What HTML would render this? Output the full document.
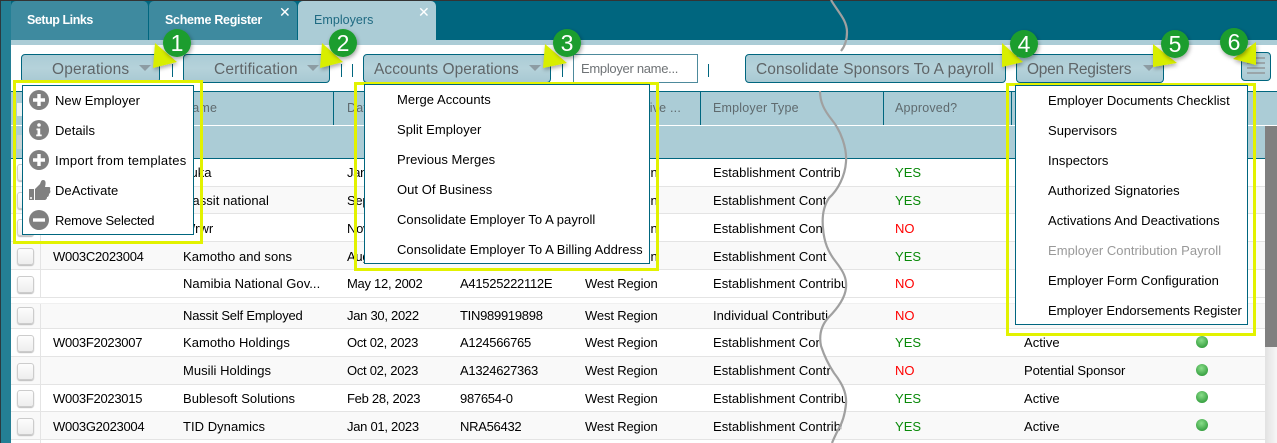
<!DOCTYPE html>
<html><head><meta charset="utf-8"><style>
html,body{margin:0;padding:0;background:#fff}
#p{position:relative;width:1277px;height:443px;overflow:hidden;background:#fff;font-family:"Liberation Sans",sans-serif;font-size:13px;color:#000}
#p div,#p span.t,#p svg{position:absolute}
.t{white-space:nowrap;line-height:18px;letter-spacing:.04px}
.d{letter-spacing:-.28px !important}
.g{letter-spacing:-.15px !important}
.tab{top:1px;height:39px;border-radius:5px 5px 0 0;box-sizing:border-box}
.btn{top:54px;height:29px;box-sizing:border-box;border:1px solid #00667f;border-radius:4px;background:linear-gradient(#abccd6,#b5d2da 50%,#a8c9d3)}
.bl{color:#5f6568;font-size:15.5px;top:61px;letter-spacing:.15px}
.caret{top:65px;width:0;height:0;border-left:6px solid transparent;border-right:6px solid transparent;border-top:6px solid #8d9ca3}
.sep{width:1px;background:#00667f;top:64px;height:13px}
.menu{background:#fff;border:1px solid #00667f;box-sizing:border-box}
.yb{border:3px solid #e2f200;box-sizing:border-box}
.r{left:11px;width:1254px;border-bottom:1px solid #e4e4e4;box-sizing:border-box}
.alt{background:#f9f9f9}
.cb{left:6px;width:17px;height:17px;box-sizing:border-box;background:linear-gradient(#fdfdfd,#eee);border:1px solid #ccc;border-radius:3px;box-shadow:0 1px 1px #bbb}
.hs{top:92px;height:33px;width:1px;background:#00667f}
.hd{color:#5f6a6e;top:99px;font-size:12.5px;letter-spacing:.2px}
.y{color:#0a8a0a}.n{color:#f00}
</style></head><body><div id="p">
<div style="left:0;top:0;width:1277px;height:1px;background:#333"></div>
<div style="left:0;top:1px;width:1277px;height:39px;background:#00667f"></div>
<div style="left:0;top:1px;width:11px;height:442px;background:#247f95"></div>
<div style="left:0;top:1px;width:1px;height:442px;background:#2b3a40"></div>
<div class="tab" style="left:11px;width:137px;background:#3e8a9f"></div>
<div class="tab" style="left:149px;width:148px;background:#3e8a9f"></div>
<div class="tab" style="left:298px;width:138px;background:#abccd6"></div>
<span class="t" style="left:27px;top:11px;color:#fff;font-weight:bold;font-size:12.5px;letter-spacing:-.45px">Setup Links</span>
<span class="t" style="left:165px;top:11px;color:#fff;font-weight:bold;font-size:12.5px;letter-spacing:-.3px">Scheme Register</span>
<span class="t" style="left:314px;top:11px;color:#1f6a82;font-size:12.5px">Employers</span>
<span class="t" style="left:279px;top:3px;color:#fff;font-size:14px">✕</span>
<span class="t" style="left:418px;top:3px;color:#fff;font-size:14px">✕</span>
<div style="left:11px;top:40px;width:1266px;height:5px;background:#abccd6"></div>

<div class="btn" style="left:21px;width:139px"></div>
<span class="t bl" style="left:52px">Operations</span><div class="caret" style="left:139px"></div>
<div class="sep" style="left:172px"></div>
<div class="btn" style="left:183px;width:147px"></div>
<span class="t bl" style="left:214px">Certification</span><div class="caret" style="left:307px"></div>
<div class="sep" style="left:341px"></div><div class="sep" style="left:352px"></div>
<div class="btn" style="left:363px;width:188px"></div>
<span class="t bl" style="left:374px;letter-spacing:.05px">Accounts Operations</span><div class="caret" style="left:529px"></div>
<div class="sep" style="left:562px"></div>
<div style="left:573px;top:54px;width:125px;height:29px;box-sizing:border-box;border:1px solid #4d8a9c;background:#fff"></div>
<span class="t" style="left:581px;top:60px;color:#6f7376;font-size:13px;letter-spacing:-.3px">Employer name...</span>
<div class="sep" style="left:708px"></div>
<div class="btn" style="left:745px;width:261px"></div>
<span class="t bl" style="left:756px;letter-spacing:.09px">Consolidate Sponsors To A payroll</span>
<div class="btn" style="left:1016px;width:148px"></div>
<span class="t bl" style="left:1027px;letter-spacing:-.25px">Open Registers</span><div class="caret" style="left:1143px"></div>
<div class="btn" style="left:1241px;top:52px;width:30px;height:29px"></div>
<div style="left:1247px;top:57px;width:18px;height:2px;background:#9aa5a9"></div>
<div style="left:1247px;top:62px;width:18px;height:2px;background:#9aa5a9"></div>
<div style="left:1247px;top:67px;width:18px;height:2px;background:#9aa5a9"></div>
<div style="left:1247px;top:72px;width:18px;height:2px;background:#9aa5a9"></div>

<div style="left:11px;top:91px;width:1266px;height:68px;background:#abccd6;border-top:1px solid #00667f;border-bottom:1px solid #00667f;box-sizing:border-box"></div>
<div style="left:11px;top:125px;width:1266px;height:1px;background:#fff"></div>
<div class="hs" style="left:333px"></div><div class="hs" style="left:445px"></div><div class="hs" style="left:571px"></div><div class="hs" style="left:700px"></div><div class="hs" style="left:883px"></div><div class="hs" style="left:1011px"></div>
<span class="t hd" style="left:183px">Name</span><span class="t hd" style="left:347px">Date</span><span class="t hd" style="left:585px">Administrative ...</span><span class="t hd" style="left:713px">Employer Type</span><span class="t hd" style="left:895px">Approved?</span>
<div style="left:17px;top:135px;width:12px;height:14px;background:#c9d3d6"></div>
<div style="left:17px;top:103px;width:12px;height:13px;background:#eef2f3"></div>

<div class="r" style="top:159px;height:28px"><div class="cb" style="top:5px"></div></div>
<div class="r alt" style="top:187px;height:27px"><div class="cb" style="top:5px"></div></div>
<div class="r" style="top:214px;height:28px"><div class="cb" style="top:5px"></div></div>
<div class="r alt" style="top:242px;height:28px"><div class="cb" style="top:6px"></div></div>
<div class="r" style="top:270px;height:28px"><div class="cb" style="top:6px"></div></div>
<div class="r alt" style="top:303px;height:26px"><div class="cb" style="top:4px"></div></div>
<div class="r" style="top:329px;height:28px"><div class="cb" style="top:6px"></div></div>
<div class="r alt" style="top:357px;height:28px"><div class="cb" style="top:6px"></div></div>
<div class="r" style="top:385px;height:27px"><div class="cb" style="top:5px"></div></div>
<div class="r alt" style="top:412px;height:28px"><div class="cb" style="top:6px"></div></div>
<div style="left:40px;top:159px;width:1px;height:284px;background:#e4e4e4"></div>
<div style="left:11px;top:298px;width:1254px;height:5px;background:#fff;border-bottom:1px solid #f0f0f0"></div>

<span class="t" style="left:183px;top:164px">Tuka</span><span class="t d" style="left:347px;top:164px">Jan 01, 2020</span><span class="t g" style="left:585px;top:164px">West Region</span><span class="t" style="left:713px;top:164px;width:127px;overflow:hidden">Establishment Contribution</span><span class="t y" style="left:895px;top:164px">YES</span>
<span class="t" style="left:183px;top:192px">Nassit national</span><span class="t d" style="left:347px;top:192px">Sep 01, 2020</span><span class="t g" style="left:585px;top:192px">West Region</span><span class="t" style="left:713px;top:192px;width:113px;overflow:hidden">Establishment Contribution</span><span class="t y" style="left:895px;top:192px">YES</span>
<span class="t" style="left:183px;top:220px">Wrwr</span><span class="t d" style="left:347px;top:220px">Nov 01, 2020</span><span class="t g" style="left:585px;top:220px">West Region</span><span class="t" style="left:713px;top:220px;width:110px;overflow:hidden">Establishment Contribution</span><span class="t n" style="left:895px;top:220px">NO</span>
<span class="t d" style="left:53px;top:248px">W003C2023004</span><span class="t" style="left:183px;top:248px">Kamotho and sons</span><span class="t d" style="left:347px;top:248px">Aug 01, 2020</span><span class="t g" style="left:585px;top:248px">West Region</span><span class="t" style="left:713px;top:248px;width:114px;overflow:hidden">Establishment Contribution</span><span class="t y" style="left:895px;top:248px">YES</span>
<span class="t" style="left:183px;top:275px">Namibia National Gov...</span><span class="t d" style="left:347px;top:275px">May 12, 2002</span><span class="t d" style="left:460px;top:275px">A41525222112E</span><span class="t g" style="left:585px;top:275px">West Region</span><span class="t" style="left:713px;top:275px;width:133px;overflow:hidden">Establishment Contribution</span><span class="t n" style="left:895px;top:275px">NO</span>
<span class="t" style="left:183px;top:307px;letter-spacing:-.2px">Nassit Self Employed</span><span class="t d" style="left:347px;top:307px">Jan 30, 2022</span><span class="t d" style="left:460px;top:307px">TIN989919898</span><span class="t g" style="left:585px;top:307px">West Region</span><span class="t" style="left:713px;top:307px;width:115px;overflow:hidden">Individual Contribution</span><span class="t n" style="left:895px;top:307px">NO</span>
<span class="t d" style="left:53px;top:334px">W003F2023007</span><span class="t" style="left:183px;top:334px">Kamotho Holdings</span><span class="t d" style="left:347px;top:334px">Oct 02, 2023</span><span class="t d" style="left:460px;top:334px">A124566765</span><span class="t g" style="left:585px;top:334px">West Region</span><span class="t" style="left:713px;top:334px;width:106px;overflow:hidden">Establishment Contribution</span><span class="t y" style="left:895px;top:334px">YES</span><span class="t" style="left:1024px;top:334px">Active</span>
<span class="t" style="left:183px;top:362px">Musili Holdings</span><span class="t d" style="left:347px;top:362px">Oct 02, 2023</span><span class="t d" style="left:460px;top:362px">A1324627363</span><span class="t g" style="left:585px;top:362px">West Region</span><span class="t" style="left:713px;top:362px;width:117px;overflow:hidden">Establishment Contribution</span><span class="t n" style="left:895px;top:362px">NO</span><span class="t" style="left:1024px;top:362px;letter-spacing:-.08px">Potential Sponsor</span>
<span class="t d" style="left:53px;top:390px">W003F2023015</span><span class="t" style="left:183px;top:390px">Bublesoft Solutions</span><span class="t d" style="left:347px;top:390px">Feb 28, 2023</span><span class="t d" style="left:460px;top:390px">987654-0</span><span class="t g" style="left:585px;top:390px">West Region</span><span class="t" style="left:713px;top:390px;width:132px;overflow:hidden">Establishment Contribution</span><span class="t y" style="left:895px;top:390px">YES</span><span class="t" style="left:1024px;top:390px">Active</span>
<span class="t d" style="left:53px;top:418px">W003G2023004</span><span class="t" style="left:183px;top:418px">TID Dynamics</span><span class="t d" style="left:347px;top:418px">Jan 01, 2023</span><span class="t d" style="left:460px;top:418px">NRA56432</span><span class="t g" style="left:585px;top:418px">West Region</span><span class="t" style="left:713px;top:418px;width:129px;overflow:hidden">Establishment Contribution</span><span class="t y" style="left:895px;top:418px">YES</span><span class="t" style="left:1024px;top:418px">Active</span>

<div style="left:1265px;top:126px;width:12px;height:317px;background:linear-gradient(90deg,#e2e2e2,#f6f6f6)"></div>
<div style="left:1265px;top:126px;width:12px;height:221px;background:#808080"></div>

<svg style="left:0;top:0" width="1277" height="443" viewBox="0 0 1277 443">
<defs><radialGradient id="g" cx=".45" cy=".35" r=".7"><stop offset="0" stop-color="#8ade8a"/><stop offset="1" stop-color="#2f9a3a"/></radialGradient></defs>
<circle cx="1202" cy="342" r="6" fill="url(#g)"/><circle cx="1202" cy="370" r="6" fill="url(#g)"/><circle cx="1202" cy="397" r="6" fill="url(#g)"/><circle cx="1202" cy="425" r="6" fill="url(#g)"/>
<path d="M831 0C838 12 847 20 847 32C847 40 845 46 841 51" fill="none" stroke="#a0a0a0" stroke-width="2.2"/>
<path d="M820 91C820 102 824 110 832 120C841 131 847 148 846 162C845 176 838 190 829 198C823 207 822 218 823 228C824 242 828 252 836 262C843 271 847 278 846 288C845 298 838 308 828 318C821 326 819 336 821 346C824 355 828 364 834 373C841 382 847 392 846 404C845 414 843 422 838 430C836 434 834 438 832 443" fill="none" stroke="#a0a0a0" stroke-width="2.2"/>
</svg>

<div class="yb" style="left:13px;top:80px;width:190px;height:164px"></div>
<div class="menu" style="left:22px;top:85px;width:172px;height:150px"></div>
<svg style="left:0;top:0" width="220" height="240" viewBox="0 0 220 240">
<circle cx="39" cy="100" r="10" fill="#808080"/><path d="M39 94v12M33 100h12" stroke="#fff" stroke-width="3.4"/>
<circle cx="39" cy="130" r="10" fill="#808080"/><circle cx="39" cy="125" r="1.8" fill="#fff"/><path d="M36.5 128.500h3.700v6h1.500v1.800h-5.500v-1.800h1.300v-4.200h-1z" fill="#fff"/>
<circle cx="39" cy="160" r="10" fill="#808080"/><path d="M39 154v12M33 160h12" stroke="#fff" stroke-width="3.4"/>
<path d="M29 189h5v11h-5z" fill="#808080"/><circle cx="31" cy="198" r="1" fill="#fff"/><path d="M35 189l5-5c1-2 1-4 3-4 3 0 3 3 2 7h4c2 0 1 2 1 3 1 2 0 3-1 4 0 2-1 3-2 3 0 2-1 3-3 3h-9z" fill="#808080"/>
<circle cx="39" cy="220" r="10" fill="#808080"/><path d="M33 220h12" stroke="#fff" stroke-width="3.4"/>
</svg>
<span class="t" style="left:55px;top:92px">New Employer</span>
<span class="t" style="left:55px;top:122px">Details</span>
<span class="t" style="left:55px;top:152px;letter-spacing:.24px">Import from templates</span>
<span class="t" style="left:55px;top:182px">DeActivate</span>
<span class="t" style="left:55px;top:212px;letter-spacing:-.22px">Remove Selected</span>

<div class="yb" style="left:354px;top:82px;width:305px;height:189px"></div>
<div class="menu" style="left:364px;top:84px;width:286px;height:180px"></div>
<span class="t" style="left:397px;top:91px">Merge Accounts</span>
<span class="t" style="left:397px;top:121px">Split Employer</span>
<span class="t" style="left:397px;top:151px">Previous Merges</span>
<span class="t" style="left:397px;top:181px">Out Of Business</span>
<span class="t" style="left:397px;top:211px">Consolidate Employer To A payroll</span>
<span class="t" style="left:397px;top:241px">Consolidate Employer To A Billing Address</span>

<div class="yb" style="left:1006px;top:83px;width:250px;height:253px"></div>
<div class="menu" style="left:1015px;top:85px;width:233px;height:240px"></div>
<span class="t" style="left:1048px;top:92px">Employer Documents Checklist</span>
<span class="t" style="left:1048px;top:122px">Supervisors</span>
<span class="t" style="left:1048px;top:152px">Inspectors</span>
<span class="t" style="left:1048px;top:182px">Authorized Signatories</span>
<span class="t" style="left:1048px;top:212px">Activations And Deactivations</span>
<span class="t" style="left:1048px;top:242px;color:#999">Employer Contribution Payroll</span>
<span class="t" style="left:1048px;top:272px">Employer Form Configuration</span>
<span class="t" style="left:1048px;top:302px;letter-spacing:-.02px">Employer Endorsements Register</span>

<svg style="left:0;top:0" width="1277" height="100" viewBox="0 0 1277 100">
<defs><filter id="s" x="-30%" y="-30%" width="160%" height="160%"><feDropShadow dx="1" dy="2" stdDeviation="2" flood-color="#000" flood-opacity=".35"/></filter></defs>
<g fill="#d8ee00" filter="url(#s)">
<path d="M155 43L177 62L153 68Z"/><path d="M322 43L343 62L320 68Z"/><path d="M545 44L567 63L543 68Z"/><path d="M1002 43L1023 62L1002 67Z"/><path d="M1153 44L1177 63L1153 67Z"/><path d="M1256 42L1256 65L1233 59Z"/>
</g>
<g fill="#1f9d2d" filter="url(#s)">
<circle cx="177" cy="43" r="14"/><circle cx="343" cy="43" r="14"/><circle cx="567" cy="43" r="14"/><circle cx="1024" cy="44" r="14"/><circle cx="1175" cy="44" r="14"/><circle cx="1234" cy="42" r="14"/>
</g>
<g fill="#fff" font-family="Liberation Sans" font-size="23" text-anchor="middle">
<text x="177" y="51">1</text><text x="343" y="51">2</text><text x="567" y="51">3</text><text x="1024" y="52">4</text><text x="1175" y="52">5</text><text x="1234" y="50">6</text>
</g>
</svg>
</div></body></html>
